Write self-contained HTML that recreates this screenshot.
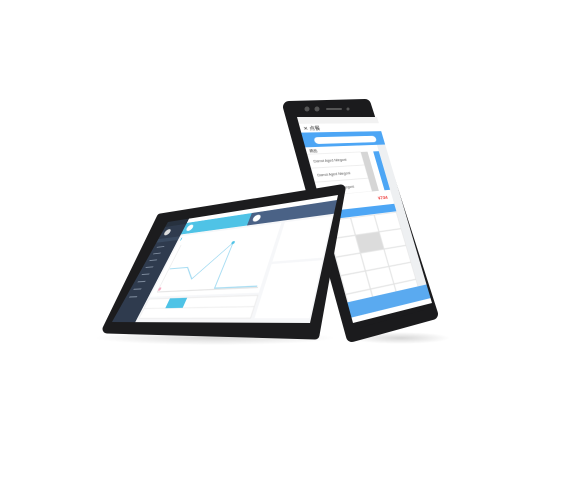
<!DOCTYPE html>
<html><head><meta charset="utf-8"><style>
html,body{margin:0;padding:0;background:#fff;width:583px;height:487px;overflow:hidden;position:relative}
svg{display:block}
text{font-family:"Liberation Sans","Noto Sans CJK SC",sans-serif}
.abs{position:absolute;left:0;top:0}
#tab{width:340px;height:200px;transform-origin:0 0;transform:matrix3d(0.28388,-0.20409,0,-0.00063941, -0.37645,0.22275,0,-0.000861, 0,0,1,0, 168,222,0,1)}
#ph{width:160px;height:400px;transform-origin:0 0;transform:matrix3d(0.73869,0.074063,0,0.00063313, 0.088925,0.46828,0,-0.00014468, 0,0,1,0, 297,117,0,1)}
</style></head><body>
<svg class="abs" width="583" height="487" viewBox="0 0 583 487">
<defs>
<radialGradient id="sh" cx="50%" cy="50%" r="50%">
<stop offset="0" stop-color="#000" stop-opacity="0.16"/><stop offset="1" stop-color="#000" stop-opacity="0"/>
</radialGradient>
</defs>
<ellipse cx="215" cy="338" rx="120" ry="7" fill="url(#sh)"/>
<ellipse cx="400" cy="338" rx="50" ry="6" fill="url(#sh)"/>
<polygon points="289,107 365,105 432,314 352,336" fill="#1b1b1d" stroke="#1b1b1d" stroke-width="12" stroke-linejoin="round"/>
<circle cx="307" cy="109" r="2.5" fill="#555"/><circle cx="317" cy="109" r="2.5" fill="#555"/>
<rect x="326" y="108" width="16" height="2" rx="1" fill="#555"/><circle cx="348" cy="109" r="1.5" fill="#555"/>
</svg>
<div id="ph" class="abs">
<svg width="160" height="400" viewBox="0 0 160 400">
<rect width="160" height="400" fill="#f4f6f8"/>
<rect width="160" height="14" fill="#f2f2f2"/>
<rect y="14" width="160" height="18" fill="#fff"/>
<text x="6" y="27" font-size="10" fill="#333">✕ 点餐</text>
<rect y="32" width="160" height="6" fill="#4da6f5"/>
<rect y="38" width="160" height="24" fill="#4da6f5"/>
<rect x="20" y="42" width="124" height="14" rx="7" fill="#fff"/>
<rect y="62" width="160" height="14" fill="#fff"/>
<text x="6" y="72" font-size="7" fill="#333">精品</text>
<g fill="#fff" stroke="#e4e4e4" stroke-width="1">
<rect y="76" width="104" height="28"/><rect y="104" width="104" height="28"/><rect y="132" width="104" height="28"/>
</g>
<g font-size="7" fill="#555"><text x="8" y="93">Darrot Aged Niegoni</text><text x="8" y="121">Darrot Aged Niegoni</text><text x="8" y="149">Darrot Aged Niegoni</text></g>
<rect x="104" y="76" width="14" height="84" fill="#d6d6d6"/>
<rect x="118" y="76" width="12" height="84" fill="#fff"/>
<rect x="130" y="76" width="12" height="84" fill="#4da6f5"/>
<rect x="142" y="62" width="18" height="338" fill="#eef0f2"/>
<rect y="160" width="142" height="30" fill="#fff"/>
<text x="112" y="178" font-size="9" fill="#e33" font-weight="bold">¥734</text>
<rect y="190" width="142" height="16" fill="#4da6f5"/>
<g fill="#fff" stroke="#ddd">
<rect x="1" y="208" width="46" height="34"/><rect x="48" y="208" width="46" height="34"/><rect x="95" y="208" width="46" height="34"/>
<rect x="1" y="243" width="46" height="34"/><rect x="48" y="243" width="46" height="34" fill="#dcdcdc"/><rect x="95" y="243" width="46" height="34"/>
<rect x="1" y="278" width="46" height="34"/><rect x="48" y="278" width="46" height="34"/><rect x="95" y="278" width="46" height="34"/>
<rect x="1" y="313" width="46" height="34"/><rect x="48" y="313" width="46" height="34"/><rect x="95" y="313" width="46" height="34"/>
<rect x="1" y="348" width="46" height="34"/><rect x="48" y="348" width="46" height="34"/><rect x="95" y="348" width="46" height="34"/>
</g>
<rect y="362" width="160" height="28" fill="#5aaaf0"/>
<rect y="390" width="160" height="10" fill="#fff"/>
</svg></div>
<svg class="abs" width="583" height="487" viewBox="0 0 583 487">
<polygon points="161,218 341,189 315,335 107,329" fill="#1c1c1e" stroke="#1c1c1e" stroke-width="9" stroke-linejoin="round"/>
</svg>
<div id="tab" class="abs">
<svg width="340" height="200" viewBox="0 0 340 200">
<rect width="340" height="200" fill="#fff"/>
<rect width="52" height="200" fill="#2f3b4e"/>
<rect width="52" height="12" fill="#27313f"/>
<circle cx="14" cy="26" r="7" fill="#ddd"/>
<rect x="0" y="40" width="52" height="8" fill="#3a4a60"/>
<g fill="#7d8a9c"><rect x="8" y="58" width="18" height="2"/><rect x="8" y="72" width="18" height="2"/><rect x="8" y="86" width="18" height="2"/><rect x="8" y="100" width="18" height="2"/><rect x="8" y="114" width="18" height="2"/><rect x="8" y="128" width="18" height="2"/><rect x="8" y="142" width="18" height="2"/><rect x="8" y="156" width="18" height="2"/></g>
<rect x="52" y="0" width="288" height="10" fill="#fff"/>
<rect x="52" y="10" width="140" height="26" fill="#4fc3e6"/>
<rect x="192" y="10" width="148" height="26" fill="#4a6286"/>
<circle cx="66" cy="23" r="7" fill="#fff"/><circle cx="206" cy="23" r="7" fill="#fff"/>
<rect x="52" y="36" width="288" height="164" fill="#f6f7f9"/>
<rect x="56" y="40" width="200" height="118" fill="#fff"/>
<rect x="262" y="40" width="76" height="70" fill="#fff"/>
<rect x="262" y="114" width="76" height="80" fill="#fff"/>
<rect x="58" y="44" width="2" height="6" fill="#4fc3e6"/>
<polyline points="68,108 106,108 126,130 178,68 178,148 250,148" fill="none" stroke="#8fd3ef" stroke-width="1.5"/>
<circle cx="178" cy="68" r="3" fill="#4fc3e6"/><circle cx="68" cy="145" r="3" fill="#f7a6c0"/>
<line x1="66" y1="150" x2="252" y2="150" stroke="#ccc"/>
<line x1="66" y1="60" x2="66" y2="150" stroke="#ddd"/>
<rect x="56" y="162" width="200" height="32" fill="#fff" stroke="#e6e6e6"/>
<line x1="56" y1="178" x2="256" y2="178" stroke="#e6e6e6"/>
<rect x="100" y="162" width="34" height="16" fill="#4fc3e6"/>
</svg></div>
</body></html>
